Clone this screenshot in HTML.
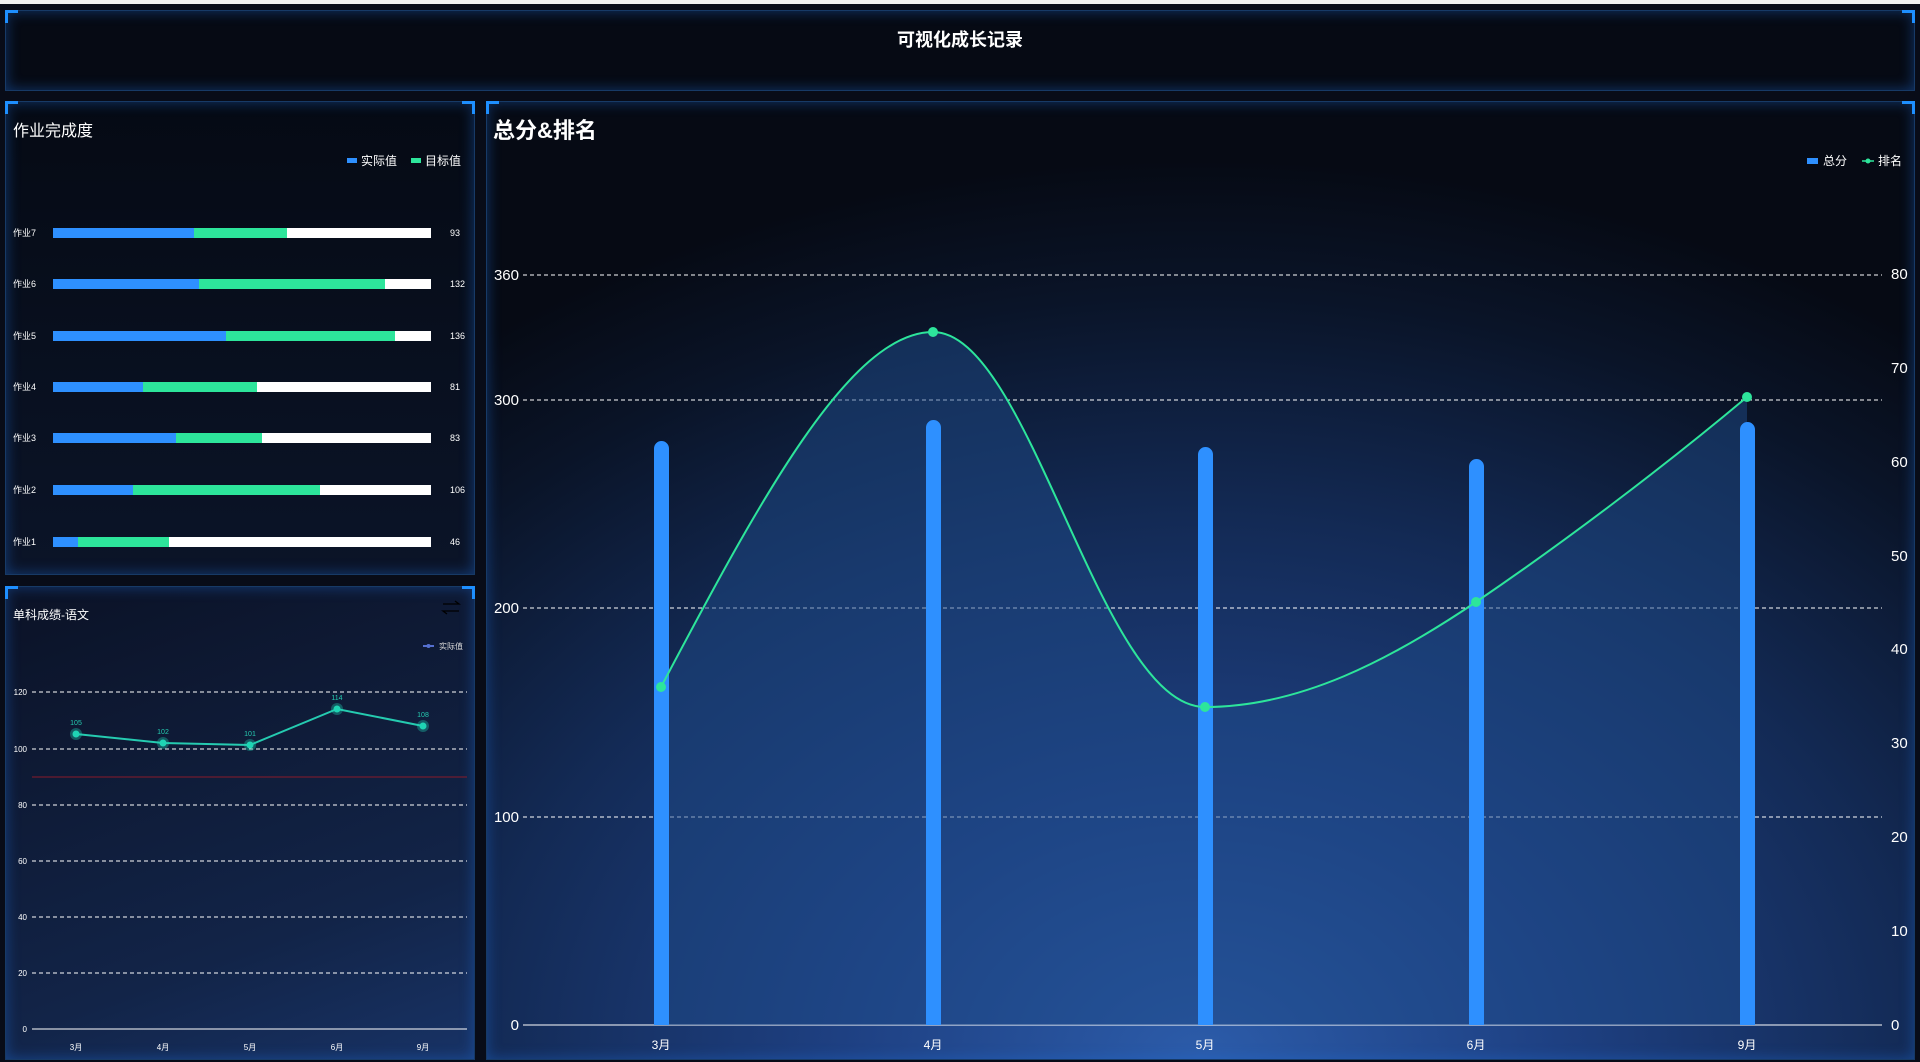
<!DOCTYPE html>
<html><head><meta charset="utf-8">
<style>
*{margin:0;padding:0;box-sizing:border-box}
html,body{width:1920px;height:1062px;overflow:hidden;background:#080c18;font-family:"Liberation Sans","Noto Sans CJK SC",sans-serif;color:#fff}
.topline{position:absolute;left:0;top:0;width:1920px;height:4px;background:#f0f0f0}
.panel{position:absolute;border:1px solid #173a66;box-shadow:inset 0 0 14px rgba(30,110,220,.45);background:#060a14}
.c{position:absolute;width:13px;height:13px;border-color:#1e8fff;border-style:solid}
.tl{left:-1px;top:-1px;border-width:3px 0 0 3px}
.tr{right:-1px;top:-1px;border-width:3px 3px 0 0}
svg{position:absolute;left:0;top:0}
</style></head><body>
<div class="topline"></div>
<div class="panel" style="left:5px;top:10px;width:1910px;height:81px"><div class="c tl"></div><div class="c tr"></div></div>
<div class="panel" style="left:5px;top:101px;width:470px;height:474px;background:linear-gradient(180deg,#050a14 0%,#0b1428 100%)"><div class="c tl"></div><div class="c tr"></div></div>
<div class="panel" style="left:5px;top:586px;width:470px;height:474px;background:linear-gradient(160deg,#0b1226 0%,#122448 70%,#183366 100%)"><div class="c tl"></div><div class="c tr"></div></div>
<div class="panel" style="left:486px;top:101px;width:1429px;height:959px;background:radial-gradient(ellipse 1200px 900px at 50% 100%,#2c5caa 0%,#1e4082 30%,#132a55 60%,#0a1428 85%,#060a14 100%)"><div class="c tl"></div><div class="c tr"></div></div>

<svg width="1920" height="1062" viewBox="0 0 1920 1062" font-family="Liberation Sans, Noto Sans CJK SC, sans-serif">
<text x="960" y="46" fill="#fff" font-size="18" font-weight="bold" text-anchor="middle">可视化成长记录</text>

<text x="13" y="136" fill="#fff" font-size="16">作业完成度</text>
<rect x="347" y="158" width="10" height="5" fill="#2e90ff"/><text x="361" y="165" font-size="12" fill="#fff">实际值</text>
<rect x="411" y="158" width="10" height="5" fill="#2de59b"/><text x="425" y="165" font-size="12" fill="#fff">目标值</text>
<g font-size="9" fill="#fff">
<g><rect x="53" y="228" width="378" height="10" fill="#fff"/><rect x="53" y="228" width="234" height="10" fill="#2de59b"/><rect x="53" y="228" width="141" height="10" fill="#2e90ff"/><text x="13" y="236">作业7</text><text x="450" y="236">93</text></g>
<g><rect x="53" y="279" width="378" height="10" fill="#fff"/><rect x="53" y="279" width="332" height="10" fill="#2de59b"/><rect x="53" y="279" width="146" height="10" fill="#2e90ff"/><text x="13" y="287">作业6</text><text x="450" y="287">132</text></g>
<g><rect x="53" y="331" width="378" height="10" fill="#fff"/><rect x="53" y="331" width="342" height="10" fill="#2de59b"/><rect x="53" y="331" width="173" height="10" fill="#2e90ff"/><text x="13" y="339">作业5</text><text x="450" y="339">136</text></g>
<g><rect x="53" y="382" width="378" height="10" fill="#fff"/><rect x="53" y="382" width="204" height="10" fill="#2de59b"/><rect x="53" y="382" width="90" height="10" fill="#2e90ff"/><text x="13" y="390">作业4</text><text x="450" y="390">81</text></g>
<g><rect x="53" y="433" width="378" height="10" fill="#fff"/><rect x="53" y="433" width="209" height="10" fill="#2de59b"/><rect x="53" y="433" width="123" height="10" fill="#2e90ff"/><text x="13" y="441">作业3</text><text x="450" y="441">83</text></g>
<g><rect x="53" y="485" width="378" height="10" fill="#fff"/><rect x="53" y="485" width="267" height="10" fill="#2de59b"/><rect x="53" y="485" width="80" height="10" fill="#2e90ff"/><text x="13" y="493">作业2</text><text x="450" y="493">106</text></g>
<g><rect x="53" y="537" width="378" height="10" fill="#fff"/><rect x="53" y="537" width="116" height="10" fill="#2de59b"/><rect x="53" y="537" width="25" height="10" fill="#2e90ff"/><text x="13" y="545">作业1</text><text x="450" y="545">46</text></g>
</g>

<text x="13" y="619" fill="#fff" font-size="12">单科成绩-语文</text>
<g stroke="#000" stroke-width="1.3" fill="none"><path d="M443 604h16l-4-3M459 611h-16l4 3"/></g>
<line x1="423" y1="646" x2="434" y2="646" stroke="#5570d0" stroke-width="2"/><circle cx="428.5" cy="646" r="2" fill="#5570d0"/>
<text x="439" y="649" font-size="8" fill="#ddd">实际值</text>
<g stroke="#fff" stroke-width="1" stroke-dasharray="4 3">
<line x1="32" y1="692" x2="467" y2="692"/><line x1="32" y1="749" x2="467" y2="749"/><line x1="32" y1="805" x2="467" y2="805"/><line x1="32" y1="861" x2="467" y2="861"/><line x1="32" y1="917" x2="467" y2="917"/><line x1="32" y1="973" x2="467" y2="973"/></g>
<line x1="32" y1="1029" x2="467" y2="1029" stroke="#fff"/>
<line x1="32" y1="777" x2="467" y2="777" stroke="#8a1a2a"/>
<g font-size="8" fill="#fff" text-anchor="end"><text x="27" y="695">120</text><text x="27" y="752">100</text><text x="27" y="808">80</text><text x="27" y="864">60</text><text x="27" y="920">40</text><text x="27" y="976">20</text><text x="27" y="1032">0</text></g>
<g font-size="8" fill="#fff" text-anchor="middle"><text x="76" y="1050">3月</text><text x="163" y="1050">4月</text><text x="250" y="1050">5月</text><text x="337" y="1050">6月</text><text x="423" y="1050">9月</text></g>
<polyline points="76,734 163,743 250,745 337,709 423,726" fill="none" stroke="#25cbb0" stroke-width="2"/>
<g fill="#1fd4b4"><circle cx="76" cy="734" r="6" opacity=".35"/><circle cx="163" cy="743" r="6" opacity=".35"/><circle cx="250" cy="745" r="6" opacity=".35"/><circle cx="337" cy="709" r="6" opacity=".35"/><circle cx="423" cy="726" r="6" opacity=".35"/>
<circle cx="76" cy="734" r="3.5"/><circle cx="163" cy="743" r="3.5"/><circle cx="250" cy="745" r="3.5"/><circle cx="337" cy="709" r="3.5"/><circle cx="423" cy="726" r="3.5"/></g>
<g font-size="7" fill="#25cbb0" text-anchor="middle"><text x="76" y="725">105</text><text x="163" y="734">102</text><text x="250" y="736">101</text><text x="337" y="700">114</text><text x="423" y="717">108</text></g>

<text x="493" y="138" fill="#fff" font-size="22" font-weight="bold">总分&amp;排名</text>
<rect x="1807" y="158" width="11" height="6" fill="#2e90ff"/><text x="1823" y="165" font-size="12" fill="#fff">总分</text>
<line x1="1862" y1="161" x2="1874" y2="161" stroke="#2de59b" stroke-width="1.5"/><circle cx="1868" cy="161" r="2.5" fill="#2de59b"/><text x="1878" y="165" font-size="12" fill="#fff">排名</text>
<g stroke="#fff" stroke-width="1" stroke-dasharray="4 3">
<line x1="523" y1="275" x2="1882" y2="275"/><line x1="523" y1="400" x2="1882" y2="400"/><line x1="523" y1="608" x2="1882" y2="608"/><line x1="523" y1="817" x2="1882" y2="817"/></g>
<line x1="523" y1="1025" x2="1882" y2="1025" stroke="#fff"/>
<g font-size="15" fill="#fff" text-anchor="end"><text x="519" y="280">360</text><text x="519" y="405">300</text><text x="519" y="613">200</text><text x="519" y="822">100</text><text x="519" y="1030">0</text></g>
<g font-size="15" fill="#fff"><text x="1891" y="279">80</text><text x="1891" y="373">70</text><text x="1891" y="467">60</text><text x="1891" y="561">50</text><text x="1891" y="654">40</text><text x="1891" y="748">30</text><text x="1891" y="842">20</text><text x="1891" y="936">10</text><text x="1891" y="1030">0</text></g>
<path d="M661,687 C760,500 850,332 933,332 C1030,332 1100,707 1205,707 C1300,707 1390,660 1476,602 C1560,545 1660,470 1747,397 L1747,1025 L661,1025 Z" fill="#1d4a88" opacity=".5"/>
<g fill="#2e90ff">
<rect x="654" y="441" width="15" height="584" rx="7.5"/><rect x="926" y="420" width="15" height="605" rx="7.5"/><rect x="1198" y="447" width="15" height="578" rx="7.5"/><rect x="1469" y="459" width="15" height="566" rx="7.5"/><rect x="1740" y="422" width="15" height="603" rx="7.5"/>
<rect x="654" y="1010" width="15" height="15"/><rect x="926" y="1010" width="15" height="15"/><rect x="1198" y="1010" width="15" height="15"/><rect x="1469" y="1010" width="15" height="15"/><rect x="1740" y="1010" width="15" height="15"/></g>
<path d="M661,687 C760,500 850,332 933,332 C1030,332 1100,707 1205,707 C1300,707 1390,660 1476,602 C1560,545 1660,470 1747,397" fill="none" stroke="#2de59b" stroke-width="2"/>
<g fill="#2de59b"><circle cx="661" cy="687" r="5"/><circle cx="933" cy="332" r="5"/><circle cx="1205" cy="707" r="5"/><circle cx="1476" cy="602" r="5"/><circle cx="1747" cy="397" r="5"/></g>
<g font-size="12" fill="#fff" text-anchor="middle"><text x="661" y="1049">3月</text><text x="933" y="1049">4月</text><text x="1205" y="1049">5月</text><text x="1476" y="1049">6月</text><text x="1747" y="1049">9月</text></g>
</svg>
</body></html>
